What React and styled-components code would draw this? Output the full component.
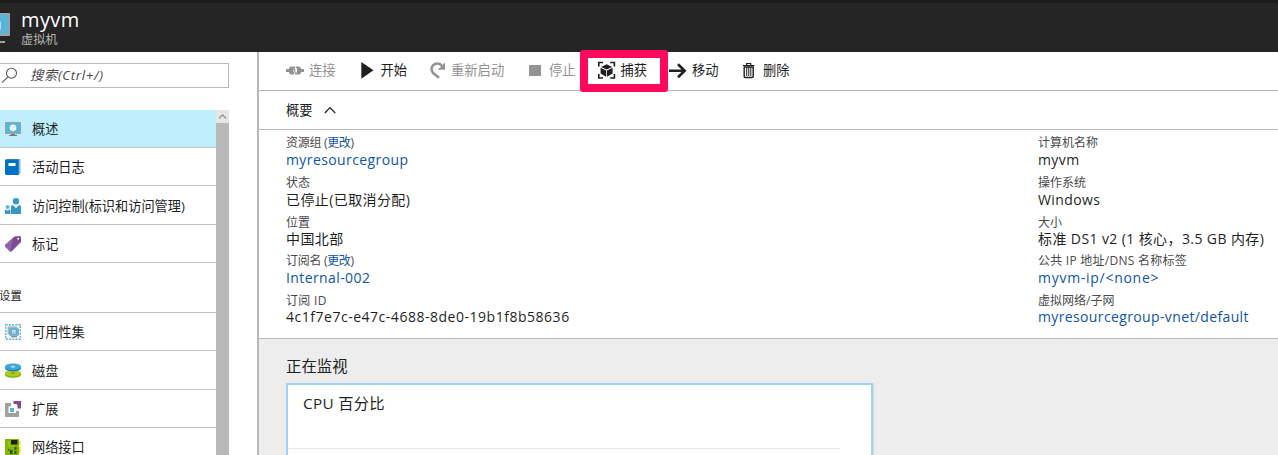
import React from 'react';
import styled, { createGlobalStyle, css } from 'styled-components';

const Global = createGlobalStyle`
  * { box-sizing: border-box; }
  body {
    margin: 0;
    overflow: hidden;
    background: #fff;
    color: #1f1f1f;
    font-family: "Open Sans", "Noto Sans CJK SC", sans-serif;
  }
`;

const Page = styled.div`
  display: flex;
  flex-direction: column;
  height: 455px;
  overflow: hidden;
`;

const Header = styled.header`
  display: flex;
  flex: none;
  height: 52px;
  background: #252525;
  border-top: 3px solid #1b1b1b;
`;

const HeaderIcon = styled.div`
  width: 21px;
  padding-top: 9px;
  svg { display: block; }
`;

const Titles = styled.div`
  display: flex;
  flex-direction: column;
`;

const Title = styled.div`
  height: 26px;
  line-height: 33px;
  font-size: 20px;
  letter-spacing: 0.4px;
  color: #fff;
`;

const Subtitle = styled.div`
  height: 20px;
  line-height: 21px;
  font-size: 12.2px;
  color: #b4b4b4;
`;

const Body = styled.div`
  display: flex;
  flex: 1;
  min-height: 0;
`;

const Sidebar = styled.nav`
  display: flex;
  flex-direction: column;
  width: 259px;
  flex: none;
  padding-top: 11px;
  border-right: 2px solid #b9b9b9;
`;

const Search = styled.div`
  display: flex;
  align-items: center;
  width: 229px;
  height: 25px;
  flex: none;
  border: 1px solid #b9b9b9;
  border-left: 0;
  color: #4a4a4a;
  font-size: 13.3px;
  letter-spacing: 0.65px;
  font-style: italic;
  line-height: 22px;
  svg { width: 18px; height: 18px; margin-right: 12px; }
  span { margin-top: -2px; }
`;

const Scroller = styled.div`
  display: flex;
  flex: 1;
  min-height: 0;
  margin-top: 22px;
  width: 229px;
  overflow: hidden;
`;

const Menu = styled.div`
  width: 216px;
`;

const rowLine = css`
  border-bottom: 1px solid #c4c4c4;
`;

const MenuRow = styled.div`
  display: flex;
  align-items: center;
  height: ${(p) => p.$h || 38}px;
  padding-top: ${(p) => (p.$h ? 1 : 0)}px;
  padding-left: 5px;
  background: ${(p) => (p.$active ? '#beeffb' : '#fff')};
  font-size: 13.2px;
  line-height: 20px;
  white-space: nowrap;
  ${rowLine}
  svg { width: 16px; height: 16px; margin-right: 11px; flex: none; }
`;

const MenuSection = styled.div`
  display: flex;
  align-items: center;
  height: 50px;
  padding-top: 15px;
  margin-left: -1px;
  font-size: 11.4px;
  ${rowLine}
`;

const Scrollbar = styled.div`
  display: flex;
  flex-direction: column;
  width: 13px;
`;

const ScrollButton = styled.div`
  height: 13px;
  background: #e6e6e6;
  svg { display: block; }
`;

const ScrollThumb = styled.div`
  flex: 1;
  background: #b9b9b9;
`;

const Main = styled.main`
  display: flex;
  flex-direction: column;
  flex: 1;
  min-width: 0;
`;

const Toolbar = styled.div`
  display: flex;
  align-items: center;
  height: 39px;
  flex: none;
  padding: 0 0 2px 27px;
  border-bottom: 1px solid #b9b9b9;
`;

const Command = styled.div`
  position: relative;
  display: flex;
  align-items: center;
  width: ${(p) => p.$w}px;
  flex: none;
  color: ${(p) => (p.$disabled ? '#939393' : '#1f1f1f')};
  font-size: 13.3px;
  line-height: 20px;
  white-space: nowrap;
`;

const CommandIcon = styled.span`
  width: ${(p) => p.$w}px;
  height: 20px;
  flex: none;
  svg { display: block; }
`;

const Highlight = styled.div`
  position: absolute;
  left: -18px;
  top: -10px;
  width: 88px;
  height: 42px;
  border: 8px solid #ff0a5a;
  border-radius: 3px;
`;

const SummaryBar = styled.div`
  display: flex;
  align-items: center;
  height: 39px;
  flex: none;
  padding: 0 0 2px 27px;
  border-bottom: 1px solid #b9b9b9;
  font-size: 13.3px;
  svg { margin: 2px 0 0 11px; }
`;

const Essentials = styled.div`
  display: flex;
  height: 209px;
  flex: none;
  padding: 5px 0 0 27px;
  border-bottom: 1px solid #b9b9b9;
`;

const Column = styled.div`
  width: ${(p) => p.$w}px;
  flex: none;
`;

const Property = styled.div`
  height: ${(p) => p.$h}px;
  white-space: nowrap;
`;

const Label = styled.div`
  height: 16px;
  line-height: 16px;
  font-size: 12px;
  letter-spacing: ${(p) => p.$track || 0}px;
  color: #4a4a4a;
`;

const Link = styled.a`
  color: #0f55a8;
`;

const Value = styled.div`
  height: 20px;
  line-height: 20px;
  margin-top: ${(p) => p.$shift}px;
  font-size: 14px;
  letter-spacing: ${(p) => p.$track || 0.4}px;
  color: ${(p) => (p.$link ? '#0f55a8' : '#1f1f1f')};
`;

const Monitoring = styled.section`
  flex: 1;
  padding: 17px 0 0 27px;
  background: #ededed;
`;

const SectionTitle = styled.div`
  height: 27px;
  line-height: 22px;
  font-size: 15.4px;
`;

const ChartCard = styled.div`
  width: 587px;
  height: 100px;
  background: #fff;
  border: 2px solid #9ad5f5;
  box-shadow: 1px 1px 1px rgba(0, 0, 0, 0.08);
`;

const ChartTitle = styled.div`
  width: 552px;
  height: 64px;
  padding: 7px 0 0 15px;
  line-height: 22px;
  font-size: 15.3px;
  letter-spacing: 0.3px;
  border-bottom: 1px solid #e6e6e6;
`;

const icons = {
  overview: (
    <svg viewBox="0 0 16 16">
      <rect x="0" y="1" width="16" height="12" fill="#a0a1a2" />
      <rect x="1" y="2" width="14" height="10" fill="#59b4d9" />
      <path d="M8 3.500l3.200 1.200v4L8 10.500 4.800 8.700v-4z" fill="#fff" />
      <path d="M5 5l3 1.200L11 5M8 6.200V10.200" stroke="#8fcde6" strokeWidth=".5" fill="none" />
      <path d="M6 13h4v1h2v1H4v-1h2z" fill="#7a7a7a" />
    </svg>
  ),
  log: (
    <svg viewBox="0 0 16 16">
      <path d="M2 0h13.500v14.500l-1.500 1H2z" fill="#8fb8dc" />
      <path d="M0 1.500L1.500.800h12.200V16H1.200L0 15z" fill="#0072c6" />
      <path d="M0 1.500L1.800.2h12" stroke="#0b5da0" strokeWidth=".8" fill="none" />
      <rect x="3.500" y="4" width="7" height="3" fill="#fff" />
    </svg>
  ),
  access: (
    <svg viewBox="0 0 16 16">
      <circle cx="11" cy="3.200" r="3.200" fill="#3999c6" />
      <path d="M6 16V8.500Q6 7 7.800 7l3.200 3 3-3q2 0 2 1.800V16z" fill="#3999c6" />
      <circle cx="2.600" cy="9" r="2" fill="#59b4d9" />
      <path d="M0 16v-4l1.200-.600 1.500 1.300 1.500-1.300L5.400 12v4z" fill="#3999c6" />
    </svg>
  ),
  tag: (
    <svg viewBox="0 0 16 16">
      <path d="M9.500.500L15 0l1 1v5L6.500 15.500 5.500 16 0 10.500V9z" fill="#804998" />
      <path d="M9.500.500L0 9v1.500L5.500 16 8 1.800z" fill="#9a6bb0" opacity=".7" />
      <circle cx="13.300" cy="2.800" r="1" fill="#fff" />
    </svg>
  ),
  availability: (
    <svg viewBox="0 0 16 16">
      <rect x=".7" y=".7" width="14.600" height="14.600" fill="#f3fafd" stroke="#59b4d9" strokeWidth="1.400" strokeDasharray="2 1.200" />
      <rect x="3" y="2.800" width="9" height="7.500" rx="1" fill="#8ac9e4" stroke="#a0a1a2" strokeWidth=".6" />
      <rect x="4.500" y="4.300" width="9" height="7.200" rx="1" fill="#59b4d9" stroke="#a0a1a2" strokeWidth=".8" />
      <path d="M7.300 6h3.200v3.500H7.300z" fill="#e8f6fb" />
      <path d="M8 7.200h1.600v1.500H8z" fill="#59b4d9" />
      <path d="M6 12h6v1.300H6z" fill="#8a8a8a" />
    </svg>
  ),
  disks: (
    <svg viewBox="0 0 16 16">
      <path d="M0 10.300v1.200c0 4.300 16 4.300 16 0v-1.200z" fill="#7fae05" />
      <ellipse cx="8" cy="10.200" rx="8" ry="3.300" fill="#a9cc1f" />
      <ellipse cx="8" cy="10" rx="2.200" ry=".9" fill="#7fae05" />
      <path d="M0 3.700v1.200c0 4.300 16 4.300 16 0V3.700z" fill="#1d75b0" />
      <ellipse cx="8" cy="3.700" rx="8" ry="3.300" fill="#3fa9dc" />
      <ellipse cx="8" cy="3.700" rx="2.200" ry=".9" fill="#c6e6f5" />
    </svg>
  ),
  extensions: (
    <svg viewBox="0 0 16 16">
      <path d="M0 2h6v3.500H3.500V12h7.500V10h3v6H0z" fill="#a0a1a2" />
      <rect x="5" y="7" width="4" height="4" fill="#59b4d9" />
      <path d="M8.500 0H16v7.500h-3.500V4.500L11.500 3h-3z" fill="#804998" />
    </svg>
  ),
  network: (
    <svg viewBox="0 0 16 16">
      <rect x="13" y="2" width="2.500" height="4" fill="#fcd116" />
      <rect x="13" y="8" width="2.500" height="6" fill="#fcd116" />
      <path d="M0 0h14v16H0z" fill="#7fba00" />
      <rect x="6" y="1" width="6.500" height="4.500" fill="#1e1e1e" />
      <path d="M3 10h1.500v1.500H3zM5 11h2.500v4H5zM9.500 8h2v3h-2zM9.500 12h2v3h-2z" fill="#2f4d00" />
      <path d="M2 3h2v4h5" stroke="#b8d432" strokeWidth=".7" fill="none" />
    </svg>
  ),
  connect: (
    <svg width="18" height="20" viewBox="0 0 18 20" fill="#939393">
      <path d="M0 9h3V8l1.500-1.500H9v2H7.500V12H8v2.500H4.500L3 13v-1H0z" />
      <path d="M18 9h-3V8l-1.500-1.500H9.800v1.800h1.200V12.500H9v2h4.500L15 13v-1h3z" />
      <path d="M6 8.700h3.300v4H8.200V9.700H6z" />
    </svg>
  ),
  start: (
    <svg width="13" height="20" viewBox="0 0 13 20"><path d="M.3 2l12.200 8.300L.3 18.700z" fill="#1f1f1f" /></svg>
  ),
  restart: (
    <svg width="16" height="20" viewBox="0 0 16 20">
      <path d="M9 17.800L2.900 12.800Q.6 9.500 2.300 6.300 4.700 3 8.700 3.700 11.500 4.300 13 7.800" fill="none" stroke="#939393" strokeWidth="2.500" />
      <path d="M15 2.500V9.700H7.800l2.500-2.500 2.200-.200.400-2.400z" fill="#939393" />
    </svg>
  ),
  stop: (
    <svg width="13" height="20" viewBox="0 0 13 20"><rect x="0" y="5" width="12" height="11" fill="#939393" /></svg>
  ),
  capture: (
    <svg width="18" height="20" viewBox="0 0 18 20">
      <path d="M.8 6.500V2.500H5M12.200 2.500h4.200v4M16.400 14v4h-4.200M5 18H.8v-4" fill="none" stroke="#1f1f1f" strokeWidth="1.600" />
      <path d="M8.600 4.200l5.500 2.700-5.500 2.700-5.500-2.700z" fill="#1f1f1f" />
      <path d="M2.600 7.800l5.600 2.700v6.200L2.600 13.500zM14.600 7.800L9 10.500v6.200l5.600-3.200z" fill="#1f1f1f" />
    </svg>
  ),
  move: (
    <svg width="18" height="20" viewBox="0 0 18 20">
      <path d="M0 10.700h16M9 4.200l6.700 6.500L9 17.200" fill="none" stroke="#1f1f1f" strokeWidth="2.600" />
    </svg>
  ),
  remove: (
    <svg width="12" height="20" viewBox="0 0 12 20">
      <path d="M0 5.500h11.500M3.700 5V3.500h4V5" fill="none" stroke="#1f1f1f" strokeWidth="1.200" />
      <path d="M1.200 7h9v9.500q0 1-1 1h-7q-1 0-1-1z" fill="none" stroke="#1f1f1f" strokeWidth="1.400" />
      <path d="M3.700 7v9M5.750 7v9M7.800 7v9" stroke="#1f1f1f" strokeWidth="1" />
    </svg>
  ),
};

const commands = [
  { icon: 'connect', text: '连接', w: 75, slot: 23, disabled: true },
  { icon: 'start', text: '开始', w: 69, slot: 19.5 },
  { icon: 'restart', text: '重新启动', w: 99, slot: 21, disabled: true },
  { icon: 'stop', text: '停止', w: 69, slot: 20, disabled: true },
  { icon: 'capture', text: '捕获', w: 71, slot: 22.5, highlight: true },
  { icon: 'move', text: '移动', w: 74, slot: 23 },
  { icon: 'remove', text: '删除', w: 60, slot: 20 },
];

const general = [
  { icon: 'overview', text: '概述', active: true },
  { icon: 'log', text: '活动日志' },
  { icon: 'access', text: '访问控制(标识和访问管理)', h: 39 },
  { icon: 'tag', text: '标记' },
];

const settings = [
  { icon: 'availability', text: '可用性集' },
  { icon: 'disks', text: '磁盘', h: 39 },
  { icon: 'extensions', text: '扩展' },
  { icon: 'network', text: '网络接口' },
];

const change = <> (<Link>更改</Link>)</>;

const leftProps = [
  { label: <>资源组{change}</>, labelTrack: -0.3, value: 'myresourcegroup', link: true },
  { label: '状态', value: '已停止(已取消分配)' },
  { label: '位置', value: '中国北部' },
  { label: <>订阅名{change}</>, labelTrack: -0.3, value: 'Internal-002', link: true },
  { label: '订阅 ID', labelTrack: 0.3, value: '4c1f7e7c-e47c-4688-8de0-19b1f8b58636', track: 0.52 },
];

const rightProps = [
  { label: '计算机名称', value: 'myvm' },
  { label: '操作系统', value: 'Windows' },
  { label: '大小', value: '标准 DS1 v2 (1 核心，3.5 GB 内存)' },
  { label: '公共 IP 地址/DNS 名称标签', labelTrack: 0.25, value: 'myvm-ip/<none>', link: true, track: 0.72 },
  { label: '虚拟网络/子网', value: 'myresourcegroup-vnet/default', link: true, track: 0.37 },
];

const heights = [40, 40, 38, 40, 39];
const shifts = [-1, -1, -2, -1, -2];

const MenuItems = ({ items }) =>
  items.map((m) => (
    <MenuRow key={m.text} $h={m.h} $active={m.active}>
      {icons[m.icon]}
      {m.text}
    </MenuRow>
  ));

const Properties = ({ items, width }) => (
  <Column $w={width}>
    {items.map((p, i) => (
      <Property key={i} $h={heights[i]}>
        <Label $track={p.labelTrack}>{p.label}</Label>
        <Value $shift={shifts[i]} $link={p.link} $track={p.track}>{p.value}</Value>
      </Property>
    ))}
  </Column>
);

export default function App() {
  return (
    <Page>
      <Global />
      <Header>
        <HeaderIcon>
          <svg width="12" height="34" viewBox="0 0 12 34">
            <path d="M0 1h9q1 0 1 1v21q0 1-1 1H0z" fill="#a0a1a2" />
            <path d="M0 2.500h8.500V22H0z" fill="#59b4d9" />
            <path d="M0 9.500l1 .5v7l-1 .7z" fill="#b9dff0" />
            <path d="M0 29h5v2H0z" fill="#a0a1a2" />
          </svg>
        </HeaderIcon>
        <Titles>
          <Title>myvm</Title>
          <Subtitle>虚拟机</Subtitle>
        </Titles>
      </Header>
      <Body>
        <Sidebar>
          <Search>
            <svg viewBox="0 0 18 18" fill="none" stroke="#555" strokeWidth="1.100">
              <circle cx="11.500" cy="6.200" r="5" />
              <path d="M8 9.900L2 15.700" />
            </svg>
            <span>搜索(Ctrl+/)</span>
          </Search>
          <Scroller>
            <Menu>
              <MenuItems items={general} />
              <MenuSection>设置</MenuSection>
              <MenuItems items={settings} />
            </Menu>
            <Scrollbar>
              <ScrollButton>
                <svg width="13" height="13" viewBox="0 0 13 13">
                  <path d="M3 8.300L6.500 4.800 10 8.300" fill="none" stroke="#888" strokeWidth="1.200" />
                </svg>
              </ScrollButton>
              <ScrollThumb />
            </Scrollbar>
          </Scroller>
        </Sidebar>
        <Main>
          <Toolbar>
            {commands.map((c) => (
              <Command key={c.text} $w={c.w} $disabled={c.disabled}>
                <CommandIcon $w={c.slot}>{icons[c.icon]}</CommandIcon>
                {c.text}
                {c.highlight && <Highlight />}
              </Command>
            ))}
          </Toolbar>
          <SummaryBar>
            概要
            <svg width="12" height="8" viewBox="0 0 12 8">
              <path d="M.8 7L6 1.500 11.200 7" fill="none" stroke="#1f1f1f" strokeWidth="1.200" />
            </svg>
          </SummaryBar>
          <Essentials>
            <Properties items={leftProps} width={752} />
            <Properties items={rightProps} width={240} />
          </Essentials>
          <Monitoring>
            <SectionTitle>正在监视</SectionTitle>
            <ChartCard>
              <ChartTitle>CPU 百分比</ChartTitle>
            </ChartCard>
          </Monitoring>
        </Main>
      </Body>
    </Page>
  );
}
